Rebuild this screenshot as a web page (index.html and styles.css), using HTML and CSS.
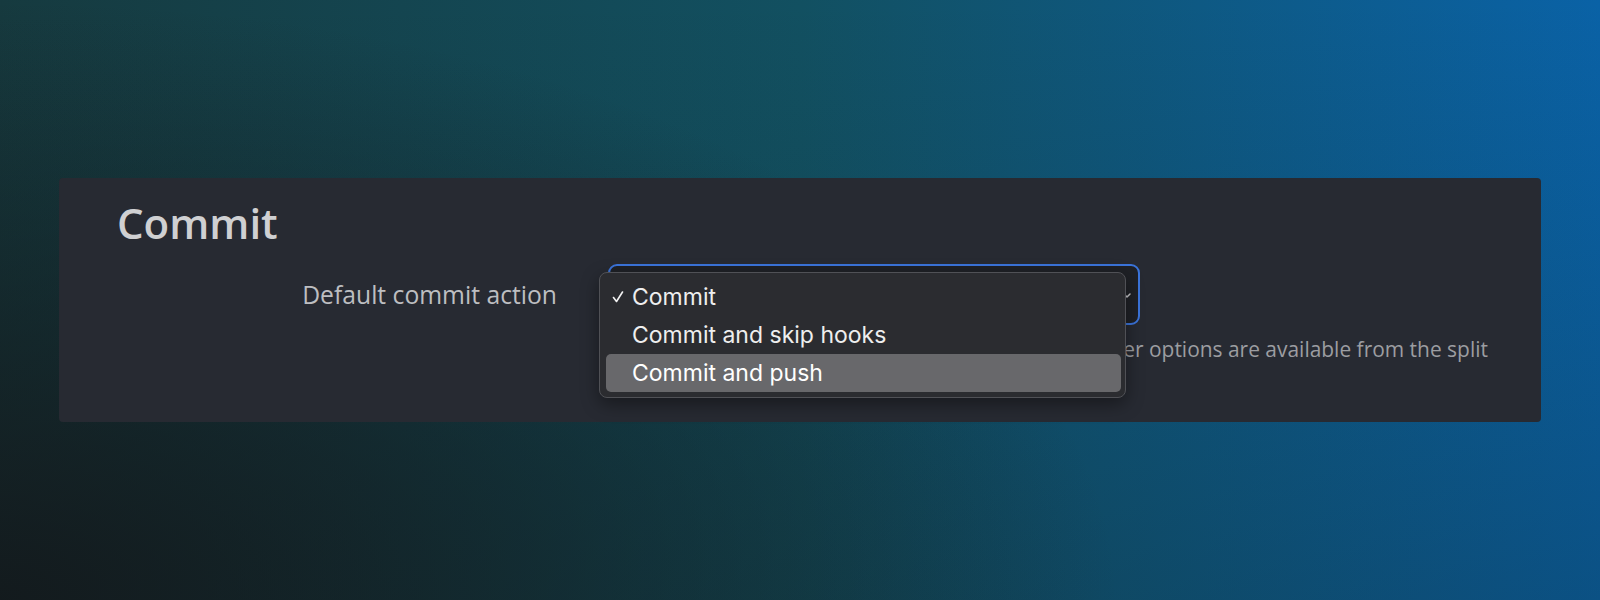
FILE: index.html
```html
<!DOCTYPE html>
<html lang="en">
<head>
<meta charset="utf-8">
<title>Commit settings</title>
<link rel="stylesheet" href="styles.css">
</head>
<body>
<section class="panel">
  <h2 class="title">Commit</h2>
  <div class="row">
    <label class="label">Default commit action</label>
    <div class="field">
      <div class="select">
        <svg class="chevron" width="10" height="10" viewBox="0 0 10 10"><path d="M2 4 L5 7 L8 4" fill="none" stroke="#c9c9cc" stroke-width="1.5" stroke-linecap="round" stroke-linejoin="round"/></svg>
        <div class="menu">
          <div class="item"><span class="check"><svg width="12" height="12" viewBox="0 0 12 12"><path d="M1.5 6.5 L4.5 10.5 L10.5 1" fill="none" stroke="#f2f2f2" stroke-width="1.6" stroke-linecap="round" stroke-linejoin="round"/></svg></span><span>Commit</span></div>
          <div class="item"><span class="check"></span><span>Commit and skip hooks</span></div>
          <div class="item active"><span class="check"></span><span>Commit and push</span></div>
        </div>
      </div>
      <p class="help">The action performed by the top commit button. Other options are available from the split button menu.</p>
    </div>
  </div>
</section>
</body>
</html>
```
FILE: styles.css
```css
html, body {
  margin: 0;
  height: 100%;
}
body {
  width: 1600px;
  height: 600px;
  box-sizing: border-box;
  padding: 0 59px;
  display: flex;
  align-items: center;
  overflow: hidden;
  font-family: "Open Sans", "Noto Sans", sans-serif;
  background:
    radial-gradient(ellipse 70% 100% at 0% 100%, rgba(19, 25, 28, 0.95) 0%, rgba(19, 25, 28, 0) 100%),
    linear-gradient(to bottom, rgba(15, 30, 30, 0) 0%, rgba(15, 30, 30, 0.25) 100%),
    linear-gradient(to right, #163a3f 0%, #125061 50%, #0a62a6 100%);
}
.panel {
  flex: 1;
  background: #272a32;
  border-radius: 4px;
  padding: 19px 0 31px 58px;
}
.title {
  margin: 0;
  font-size: 42px;
  line-height: 52px;
  font-weight: 600;
  color: #cfd0d2;
}
.row {
  margin-top: 15px;
  display: grid;
  grid-template-columns: 440px 1fr;
  column-gap: 51px;
  align-items: start;
}
.label {
  text-align: right;
  font-size: 24.7px;
  line-height: 61px;
  color: #bdbec1;
}
.field {
  display: flex;
  flex-direction: column;
}
.select {
  position: relative;
  width: 532px;
  height: 61px;
  box-sizing: border-box;
  border: 2px solid #3b74da;
  border-radius: 9px;
  background: #1f2126;
  display: flex;
  align-items: center;
  justify-content: flex-end;
  padding-right: 6px;
}
.chevron {
  display: block;
}
.menu {
  position: absolute;
  top: 6px;
  left: -11px;
  width: 527px;
  box-sizing: border-box;
  padding: 5px 4px 5px 6px;
  background: #2b2c30;
  border: 1px solid #505156;
  border-radius: 8px;
  box-shadow: 0 6px 18px rgba(0, 0, 0, 0.4);
  font-family: "Inter", "Liberation Sans", sans-serif;
  font-size: 23px;
  color: #eeeeee;
  z-index: 2;
}
.item {
  height: 38px;
  line-height: 38px;
  display: flex;
  align-items: center;
  padding-left: 6px;
  border-radius: 5px;
}
.item.active {
  background: #68686b;
  color: #ffffff;
}
.check {
  width: 20px;
  display: flex;
  align-items: center;
}
.check svg {
  display: block;
}
.help {
  margin: 10px 0 0;
  max-width: 900px;
  font-size: 20.95px;
  line-height: 28px;
  color: #9c9da1;
}
```
